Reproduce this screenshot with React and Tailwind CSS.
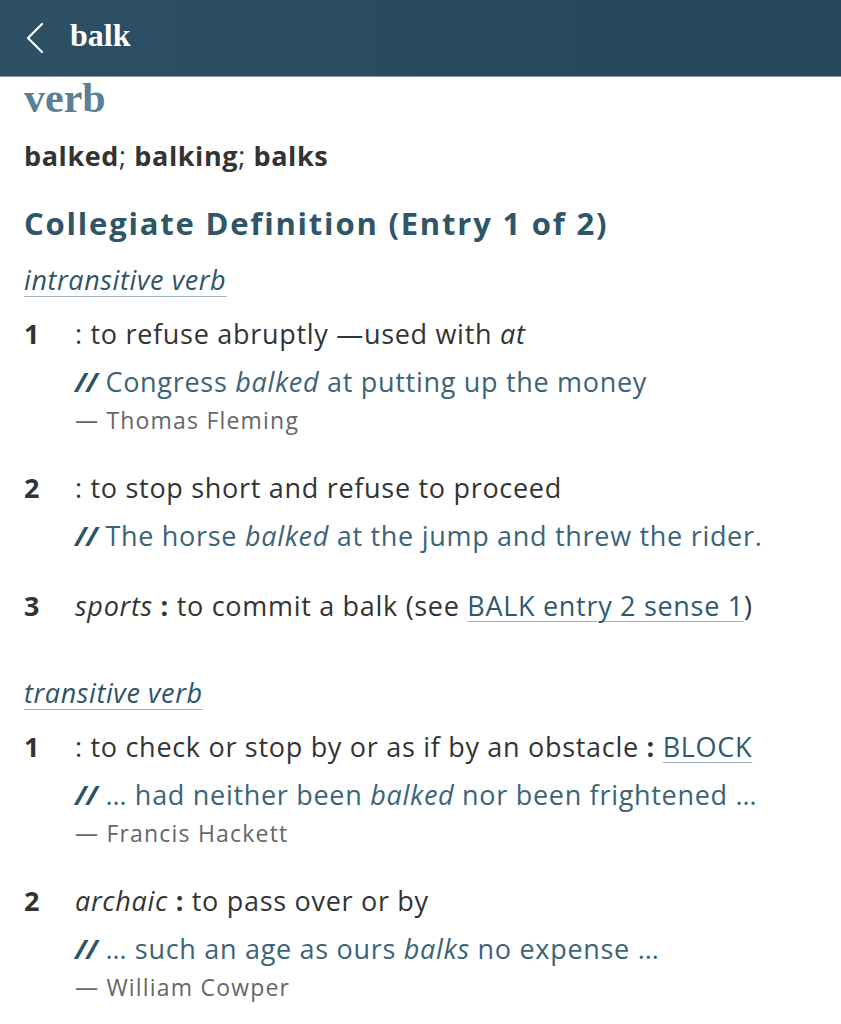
import React from 'react';

const sans = { fontFamily: '"Open Sans", "Noto Sans", sans-serif' };

// Sense rows for each verb type
const intransitive = [
  {
    num: '1',
    def: <>: to refuse abruptly —used with <i>at</i></>,
    example: <>Congress <i>balked</i> at putting up the money</>,
    author: 'Thomas Fleming',
  },
  {
    num: '2',
    def: <>: to stop short and refuse to proceed</>,
    example: <>The horse <i>balked</i> at the jump and threw the rider.</>,
  },
  {
    num: '3',
    def: (
      <>
        <i>sports</i> <b className="font-bold">:</b> to commit a balk (see{' '}
        <span className="text-[#2f5a70] underline decoration-[#9db4c2] decoration-1 underline-offset-[5px]">BALK entry 2 sense 1</span>)
      </>
    ),
  },
];

const transitive = [
  {
    num: '1',
    def: (
      <>
        : to check or stop by or as if by an obstacle <b className="font-bold">:</b>{' '}
        <span className="text-[#2f5a70] underline decoration-[#9db4c2] decoration-1 underline-offset-[5px]">BLOCK</span>
      </>
    ),
    example: <>… had neither been <i>balked</i> nor been frightened …</>,
    author: 'Francis Hackett',
  },
  {
    num: '2',
    def: <><i>archaic</i> <b className="font-bold">:</b> to pass over or by</>,
    example: <>… such an age as ours <i>balks</i> no expense …</>,
    author: 'William Cowper',
  },
];

const Sense = ({ item, first }) => (
  <div className={first ? 'mt-[18px]' : item.num === '3' ? 'mt-[34px]' : 'mt-[35px]'}>
    <div className="flex">
      <div className="w-[51px] shrink-0 text-[27px] leading-[36px] font-bold text-[#333]">{item.num}</div>
      <div className="text-[27px] leading-[36px] tracking-[0.7px] text-[#333]">{item.def}</div>
    </div>
    {item.example && (
      <div className="ml-[51px] mt-[12px] text-[27px] leading-[36px] tracking-[0.7px] text-[#3b6478]">
        <b className="font-bold italic text-[#2b5268] tracking-normal">//</b> {item.example}
      </div>
    )}
    {item.author && (
      <div className="ml-[51px] mt-[5px] text-[23px] leading-[30px] tracking-[1.2px] text-[#666]">— {item.author}</div>
    )}
  </div>
);

const Label = ({ children, className }) => (
  <div className={className}>
    <span className="text-[27px] leading-[36px] tracking-[0.6px] italic text-[#2e5568] underline decoration-[#9db4c2] decoration-1 underline-offset-[6px]">
      {children}
    </span>
  </div>
);

export default function App() {
  return (
    <div className="w-[841px] h-[1024px] bg-white overflow-hidden" style={sans}>
      <div className="h-[77px] flex items-center bg-gradient-to-r from-[#2d5064] to-[#26465a] border-b border-[#8a9aa4]">
        <svg className="ml-[24px]" width="22" height="34" viewBox="0 0 22 34" fill="none">
          <path d="M18 3 L4 17 L18 31" stroke="white" strokeWidth="2.2" strokeLinecap="round" strokeLinejoin="round" />
        </svg>
        <span
          className="ml-[24px] text-[32px] font-bold text-white leading-none mb-[6px]"
          style={{ fontFamily: '"Liberation Serif", "DejaVu Serif", serif' }}
        >
          balk
        </span>
      </div>

      <div className="px-[24px]">
        <div
          className="text-[42px] leading-[42px] font-bold text-[#5b7f97]"
          style={{ fontFamily: '"Liberation Serif", "DejaVu Serif", serif' }}
        >
          verb
        </div>
        <div className="mt-[19px] text-[27px] leading-[36px] tracking-[0.6px] text-[#333]">
          <b className="font-bold">balked</b>; <b className="font-bold">balking</b>; <b className="font-bold">balks</b>
        </div>
        <div className="mt-[29px] text-[31px] leading-[40px] tracking-[1.8px] font-bold text-[#2e5568]">
          Collegiate Definition (Entry 1 of 2)
        </div>

        <Label className="mt-[19px]">intransitive verb</Label>
        {intransitive.map((item, i) => (
          <Sense key={'i' + i} item={item} first={i === 0} />
        ))}

        <Label className="mt-[51px]">transitive verb</Label>
        {transitive.map((item, i) => (
          <Sense key={'t' + i} item={item} first={i === 0} />
        ))}
      </div>
    </div>
  );
}
